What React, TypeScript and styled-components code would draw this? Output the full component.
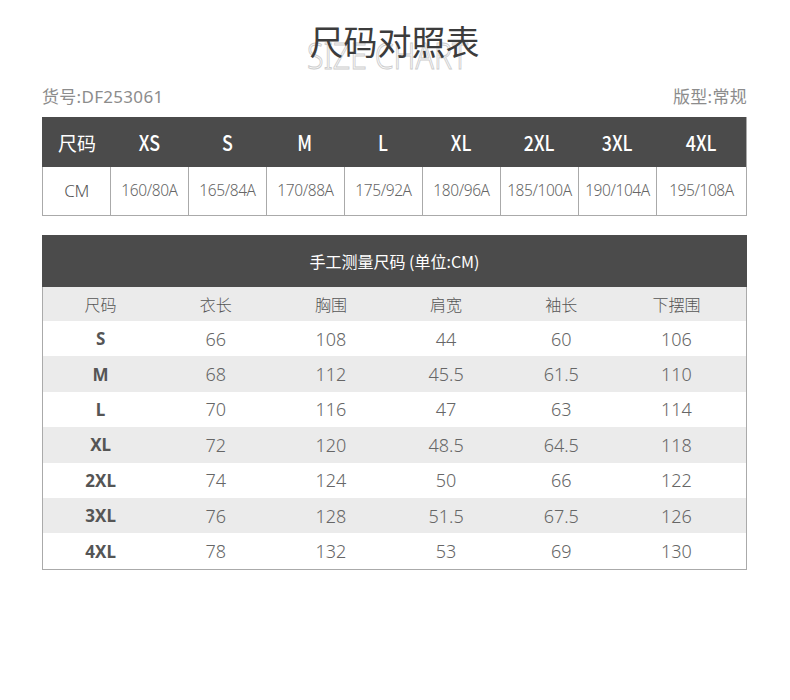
import React from 'react';
import styled, { createGlobalStyle } from 'styled-components';

const GlobalStyle = createGlobalStyle`
  body {
    margin: 0;
    background: #fff;
    font-family: "Noto Sans", "Noto Sans CJK SC", sans-serif;
  }
`;

const Page = styled.div`
  width: 790px;
  height: 700px;
  padding: 0 43px 0 42px;
  box-sizing: border-box;
`;

const TitleBlock = styled.div`
  position: relative;
  height: 78px;
  display: flex;
  justify-content: center;
`;

const Watermark = styled.div`
  position: absolute;
  top: 31px;
  left: 0;
  right: 0;
  text-align: center;
  font-family: "Noto Sans", sans-serif;
  font-size: 36px;
  line-height: normal;
  font-weight: 300;
  color: #fff;
  -webkit-text-stroke: 1px #cdcdcd;
  transform: translateX(-7px) scaleX(0.84);
`;

const Title = styled.h1`
  position: relative;
  margin: 16px 0 0;
  font-family: "Noto Sans CJK SC", sans-serif;
  font-size: 34px;
  font-weight: 400;
  color: #3c3c3c;
`;

const InfoRow = styled.div`
  display: flex;
  justify-content: space-between;
  align-items: center;
  height: 34px;
  margin-bottom: 5px;
  font-family: "Noto Sans", "Noto Sans CJK SC", sans-serif;
  font-size: 17px;
  font-weight: 400;
  letter-spacing: 0.3px;
  color: #8c8c8c;
`;

const SizeTable = styled.div`
  display: grid;
  grid-template-columns: 68px repeat(7, 78px) 1fr;
  border-right: 1px solid #aaa;
  border-bottom: 1px solid #aaa;
`;

const HeadCell = styled.div<{ $first?: boolean }>`
  height: 50px;
  background: #4b4b4b;
  color: #fff;
  display: flex;
  align-items: center;
  justify-content: center;
  font-family: "Noto Sans CJK SC", sans-serif;
  font-size: ${p => (p.$first ? '19px' : '21px')};
  font-weight: ${p => (p.$first ? 400 : 500)};
  ${p => (p.$first ? 'padding-left: 2px;' : '')}
`;

const Narrow = styled.span`
  display: inline-block;
  transform: scaleX(0.85);
`;

const ValueCell = styled.div<{ $first?: boolean }>`
  height: 48px;
  border-left: 1px solid #aaa;
  display: flex;
  align-items: center;
  justify-content: center;
  font-family: "Noto Sans", sans-serif;
  font-size: ${p => (p.$first ? '17px' : '15.5px')};
  font-weight: 300;
  color: ${p => (p.$first ? '#555' : '#666')};
  padding-bottom: 2px;
  box-sizing: border-box;
  letter-spacing: -0.4px;
`;

const MeasureTable = styled.div`
  margin-top: 19px;
  border-left: 1px solid #aaa;
  border-right: 1px solid #aaa;
  border-bottom: 1px solid #aaa;
`;

const MeasureHead = styled.div`
  height: 52px;
  margin: 0 -1px;
  background: #4b4b4b;
  color: #fff;
  display: flex;
  align-items: center;
  justify-content: center;
  font-family: "Noto Sans CJK SC", sans-serif;
  font-size: 16px;
`;

const Row = styled.div<{ $shade?: boolean; $header?: boolean }>`
  display: grid;
  grid-template-columns: repeat(6, 1fr);
  height: ${p => (p.$header ? '34px' : '35.4px')};
  background: ${p => (p.$shade ? '#ebebeb' : '#fff')};
  padding-right: 12px;
`;

const Cell = styled.div<{ $kind: 'head' | 'size' | 'num' }>`
  display: flex;
  align-items: center;
  justify-content: center;
  color: ${p => (p.$kind === 'num' ? '#666' : '#555')};
  font-family: ${p => (p.$kind === 'head' ? '"Noto Sans CJK SC", sans-serif' : '"Noto Sans", sans-serif')};
  font-size: ${p => (p.$kind === 'head' ? '16px' : p.$kind === 'size' ? '17px' : '18px')};
  font-weight: ${p => (p.$kind === 'size' ? 700 : 300)};
`;

const sizes = ['XS', 'S', 'M', 'L', 'XL', '2XL', '3XL', '4XL'];
const cms = ['160/80A', '165/84A', '170/88A', '175/92A', '180/96A', '185/100A', '190/104A', '195/108A'];

const headers = ['尺码', '衣长', '胸围', '肩宽', '袖长', '下摆围'];
const measures = [
  ['S', '66', '108', '44', '60', '106'],
  ['M', '68', '112', '45.5', '61.5', '110'],
  ['L', '70', '116', '47', '63', '114'],
  ['XL', '72', '120', '48.5', '64.5', '118'],
  ['2XL', '74', '124', '50', '66', '122'],
  ['3XL', '76', '128', '51.5', '67.5', '126'],
  ['4XL', '78', '132', '53', '69', '130'],
];

export default function App() {
  return (
    <Page>
      <GlobalStyle />
      <TitleBlock>
        <Watermark>SIZE CHART</Watermark>
        <Title>尺码对照表</Title>
      </TitleBlock>
      <InfoRow>
        <span>货号:DF253061</span>
        <span>版型:常规</span>
      </InfoRow>

      <SizeTable>
        <HeadCell $first>尺码</HeadCell>
        {sizes.map(s => (
          <HeadCell key={s}>
            <Narrow>{s}</Narrow>
          </HeadCell>
        ))}
        <ValueCell $first>CM</ValueCell>
        {cms.map(c => (
          <ValueCell key={c}>{c}</ValueCell>
        ))}
      </SizeTable>

      <MeasureTable>
        <MeasureHead>手工测量尺码 (单位:CM)</MeasureHead>
        <Row $header $shade>
          {headers.map(h => (
            <Cell key={h} $kind="head">{h}</Cell>
          ))}
        </Row>
        {measures.map((r, i) => (
          <Row key={r[0]} $shade={i % 2 === 1}>
            {r.map((v, j) => (
              <Cell key={j} $kind={j === 0 ? 'size' : 'num'}>{v}</Cell>
            ))}
          </Row>
        ))}
      </MeasureTable>
    </Page>
  );
}
